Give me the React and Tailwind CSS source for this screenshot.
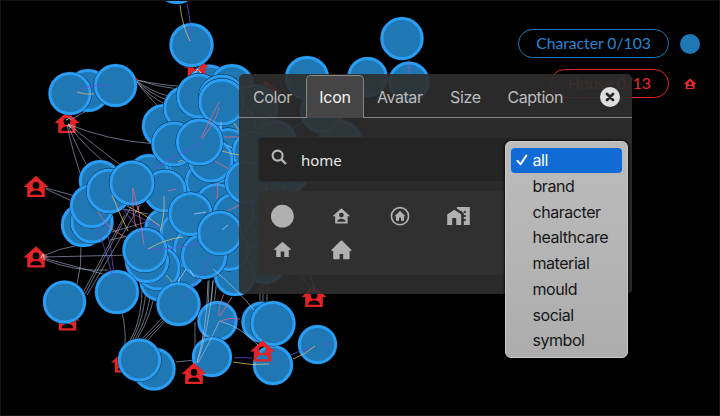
import React from "react";

const HOUSE =
  "M12 3 2 12h3v8h14v-8h3zM12 8a2.7 2.7 0 1 1 0 5.4A2.7 2.7 0 0 1 12 8zM7.3 18.2c0-4.6 9.4-4.6 9.4 0z";

// x, y, radius; drawn back to front
const FAR_NODES = [[209, 86, 21.5], [232, 86, 22]];
const BACK_NODES = [
  [177, -18, 22], [88, 90.5, 21.5], [70, 93.5, 21.5], [115.5, 85.5, 21.5],
  [254, 108, 24], [258, 140, 24], [248, 165, 24], [285, 170, 25], [275, 142, 22], [262, 198, 26],
  [254, 237, 22], [265, 262, 22], [340, 142, 22], [322, 111, 22], [307, 78, 22], [367.5, 77, 20],
  [409, 82, 20.5], [402, 38.5, 21.5],
  [190, 128, 22], [235, 125, 22], [205, 142, 23], [228, 150, 22], [254, 152, 22], [190, 168, 22], [207, 182, 22],
  [228, 200, 22], [207, 212, 22],
  [149, 175, 21], [165, 228, 20.5], [180, 232, 20], [186, 268, 20], [160, 281, 20.5], [164, 126, 22],
  [211, 160, 22.5], [217, 205, 22], [165, 191, 21.5], [234, 214, 21], [235, 275, 21], [229, 250, 21],
  [186, 108, 22.5], [174, 144, 22.5], [199, 96, 22.5], [222, 98, 23.5], [222, 102, 23.5],
  [247, 182, 22], [199.5, 142, 23.5],
  [100, 181, 21], [83, 225, 22], [92, 222, 21.5], [92, 206, 22], [109, 191, 22.5], [132, 183, 22.5],
  [196, 249, 23], [204, 256, 23], [190.5, 214, 22], [220, 233, 22.5],
  [158, 268, 22.5], [147, 261, 22], [145, 250, 22.5],
];
const FRONT_NODES = [
  [191.5, 45, 22], [117, 292, 22], [64.5, 302, 21.5], [178.5, 304, 22], [217.5, 321, 20], [212, 357, 20],
  [154, 369, 21.5], [139.5, 360, 21.5], [262, 322, 20.5], [273, 365, 20], [273, 323.5, 22.5],
  [317.5, 344.5, 19.5],
];
const BACK_HOUSES = [[196.5, 67], [67, 122.5], [36, 186.5], [36, 257], [67.5, 320], [123.5, 362], [266, 91]];
const FRONT_HOUSES = [[194, 373.5], [262.5, 351], [314, 296.5]];

const GREY_BACK = [
  "M67 125Q72 150 83 182", "M68 125Q77 148 92 175", "M69 125Q85 148 112 168", "M70 125Q90 142 122 166",
  "M68 124Q105 140 155 144", "M70 120L88 110", "M46 189L76 203", "M46 188L75 196",
  "M43 256Q60 248 75 246", "M43 257L130 255", "M43 258Q70 265 110 276", "M43 259Q75 272 108 270",
  "M137 80Q160 85 178 86", "M137 80Q158 87 178 89", "M137 81Q150 91 168 96", "M137 81Q150 94 167 100",
  "M137 82Q150 97 165 104", "M137 82Q150 99 158 106", "M81 245Q82 265 77 284", "M85 294L132 205",
  "M87 295L140 205", "M84 291L125 215", "M112 232L150 221", "M119 208L148 214", "M110 240L145 232",
  "M122 312Q126 330 125 345", "M130 341Q143 318 142 283", "M132 341Q146 315 146 283",
  "M134 341Q150 315 151 285", "M136 341Q154 312 155 286", "M140 341L168 312", "M142 342L174 310",
  "M145 343L180 305", "M209 280Q210 325 195 362", "M213 280Q212 320 196 362", "M217 279Q214 320 197 362",
  "M195 322L195 362", "M260 285V304", "M263 275V304", "M267 275V304", "M300 275L314 292", "M310 275L315 290",
  "M176 362L205 359", "M265 132Q290 132 307 120",
];
const GREY_FRONT = [
  "M208 281Q207 330 197 362", "M213 281Q209 330 197 363", "M219 322Q210 342 198 363",
  "M213 269Q235 287 254 310", "M219 321Q240 326 258 345",
];
const PURPLE = [
  "M75 92Q90 83 109 86", "M187 4Q191 20 191 42", "M96 228Q105 245 112 275", "M105 222Q112 248 114 275",
  "M147 249Q175 250 200 243", "M154 169Q175 155 202 143", "M234 358Q240 357 252 358",
  "M291 355Q300 350 315 347", "M235 321H228", "M125 210Q145 220 160 227", "M180 300Q198 285 211 256",
  "M323 344H331", "M272 366L278 360", "M120 205L146 239",
];
const YELLOW = [
  "M77 92Q85 95 94 94", "M180 5Q182 25 190 41", "M112 195Q120 215 128 231", "M127 206Q145 214 160 226",
  "M148 249Q165 239 183 237", "M164 196Q165 215 160 231", "M178 162L183 160", "M222 151Q231 154 240 155",
  "M234 123L240 132", "M233 362Q252 366 269 364", "M293 359Q306 354 315 346", "M166 275L172 282",
];
const PINK = [
  "M201 138L219 102", "M202 139Q218 118 219 107", "M98 211Q105 227 125 237", "M133 188L138 210",
  "M138 206L144 245", "M133 188Q132 214 136 227", "M224 137H240", "M215 161L229 169", "M218 182L217 199",
  "M227 211L240 205", "M168 191L176 189", "M219 316Q218 306 224 294", "M220 316L232 297",
  "M220 321Q230 317 240 319",
];
const PALE = ["M194 214L206 212", "M222 230L228 225", "M221 130V122", "M227 145L232 148", "M190 270L194 277", "M178 282L186 269"];

function Node({ c }) {
  return (
    <g>
      <circle cx={c[0]} cy={c[1]} r={c[2] + 0.5} fill="#09263d" />
      <circle cx={c[0]} cy={c[1]} r={c[2] - 1.4} fill="#1f77b4" stroke="#2a9df4" strokeWidth="3" />
    </g>
  );
}

function House({ p }) {
  return (
    <path d={HOUSE} fill="#e32326" fillRule="evenodd" transform={`translate(${p[0] - 15} ${p[1] - 14.4}) scale(1.25)`} />
  );
}

function Lines({ paths, color, opacity = 0.7, width = 0.9 }) {
  return (
    <g fill="none" stroke={color} strokeOpacity={opacity} strokeWidth={width}>
      {paths.map((d) => <path key={d} d={d} />)}
    </g>
  );
}

function Graph() {
  return (
    <svg className="absolute inset-0" width="720" height="416" viewBox="0 0 720 416">
      {FAR_NODES.map((c, i) => <Node key={i} c={c} />)}
      {BACK_HOUSES.map((p, i) => <House key={i} p={p} />)}
      <Lines paths={GREY_BACK} color="#a9b8d8" opacity={0.65} />
      {BACK_NODES.map((c, i) => <Node key={i} c={c} />)}
      {FRONT_NODES.map((c, i) => <Node key={i} c={c} />)}
      {FRONT_HOUSES.map((p, i) => <House key={i} p={p} />)}
      <Lines paths={GREY_FRONT} color="#a9c8e8" opacity={0.7} />
      <Lines paths={PURPLE} color="#6a50d8" opacity={0.85} />
      <Lines paths={YELLOW} color="#d8bf70" opacity={0.85} />
      <Lines paths={PINK} color="#d8688c" opacity={0.9} />
      <Lines paths={PALE} color="#a9c8f0" opacity={0.9} />
      <Lines paths={["M409 60V74"]} color="#a65ac0" />
      <Lines paths={["M66 120L70 118M68 124L71 128M195 73L197.5 69L201 73M41 258L43 254L44 258"]} color="#e8e4f4" opacity={0.8} width={1} />
      <circle cx="136.5" cy="79" r="0.9" fill="#e32326" />
    </svg>
  );
}

function Legend() {
  return (
    <div className="flex flex-col items-end gap-[11px] pt-[29px] pr-5 font-['Lato',sans-serif] text-[15.7px]">
      <div className="flex items-center gap-[11px]">
        <div className="flex h-[29px] w-[151px] items-center justify-center rounded-full border border-[#1f77b4] pt-px text-[#2487d0]">
          Character 0/103
        </div>
        <div className="size-5 rounded-full bg-[#1f77b4]" />
      </div>
      <div className="flex items-center gap-[11px]">
        <div className="flex h-[29px] w-[119px] items-center justify-center rounded-full border border-[#e32326] pt-px text-[#ee2a2d]">
          House 0/13
        </div>
        <svg className="size-5" viewBox="-4.2 -4 32 32">
          <path d={HOUSE} fill="#f0282b" fillRule="evenodd" />
        </svg>
      </div>
    </div>
  );
}

const label = "font-['Inter',sans-serif] text-[16px]";

function Tabs() {
  return (
    <div className="flex h-[44px] items-stretch">
      <div className={`flex w-[67px] items-center border-b border-[#858585] pl-[14px] pt-[2px] text-[#bcbcbc] ${label}`}>
        <span className="tracking-[-0.35px]">Color</span>
      </div>
      <div className={`mt-px flex w-[58px] items-center justify-center rounded-t-[5px] border border-b-0 border-[#858585] bg-[#454545] text-[#f4f4f4] ${label}`}>
        <span className="tracking-[-0.3px]">Icon</span>
      </div>
      <div className={`flex flex-1 items-center border-b border-[#858585] pl-[13px] pt-[2px] text-[#bcbcbc] ${label}`}>
        <span className="w-[73px] tracking-[-0.45px]">Avatar</span>
        <span className="w-[57.5px] tracking-[-0.35px]">Size</span>
        <span className="w-[92.5px] tracking-[-0.45px]">Caption</span>
        <svg className="size-5" viewBox="0 0 20 20">
          <circle cx="10" cy="10" r="10" fill="#dedede" />
          <path d="M7 7l6 6M13 7l-6 6" stroke="#242424" strokeWidth="2.8" strokeLinecap="round" />
        </svg>
      </div>
    </div>
  );
}

function IconGrid() {
  return (
    <div className="mt-[9px] grid h-[84px] w-[354px] grid-cols-[58.7px_58.7px_58.7px_58.7px] content-start justify-start gap-y-[10px] rounded-[5px] bg-[#303030] pl-[13px] pt-[13px] text-[#b0b0b0]">
      <svg className="size-6" viewBox="0 0 24 24" fill="currentColor">
        <circle cx="11.4" cy="12.2" r="11.4" />
      </svg>
      <svg className="size-6" viewBox="0 0 24 24">
        <path d={HOUSE} fill="currentColor" fillRule="evenodd" transform="translate(.7 1.6) scale(.89)" />
      </svg>
      <svg className="size-6" viewBox="0 0 24 24" fill="currentColor">
        <circle cx="12" cy="12.2" r="8.6" fill="none" stroke="currentColor" strokeWidth="1.6" />
        <path d="M12 7 6.4 12.2H8v4.6h3v-3.4h2v3.4h3v-4.6h1.6z" />
      </svg>
      <svg className="size-6" viewBox="0 0 24 24" fill="currentColor">
        <path d="M8.17 5.7 1 10.48V21h5v-7h4v7h5V10.25z" transform="translate(-.8 0)" />
        <path fillRule="evenodd" d="M10 3v1.51l2 1.33L13.73 7H15v.85l2 1.34V21h6V3zm7 4h2v2h-2zm2 4v2h-2v-2zm0 4v2h-2v-2z" transform="translate(-.2 0)" />
      </svg>
      <svg className="size-6" viewBox="0 0 24 24" fill="currentColor">
        <path d="M10 20v-6h4v6h5v-8h3L12 3 2 12h3v8z" transform="translate(.7 1) scale(.9)" />
      </svg>
      <svg className="size-6" viewBox="-.6 0 24 24" fill="currentColor">
        <path transform="translate(-1.2 0)" d="M11.2 2.8Q12 2 12.8 2.8l9 9q1 1.1-.5 1.1H20.2V20q0 1.2-1.2 1.2H13.8v-5.2h-3.6v5.2H5q-1.2 0-1.2-1.2v-7.1H2.7q-1.5 0-.5-1.1z" />
      </svg>
    </div>
  );
}

function Panel() {
  return (
    <div className="absolute left-[239px] top-[74px] h-[220px] w-[393px] overflow-hidden rounded-[5px] bg-[#2e2e2e]/91">
      <Tabs />
      <div className="pl-[19px] pt-[19px]">
        <div className="flex h-[45px] w-[354px] items-center rounded-[5px] border border-[#2b2b2b] bg-[#242424] pl-[12px]">
          <svg className="-mt-[5px] size-4" viewBox="0 0 16 16" fill="none" stroke="#b5b5b5" strokeWidth="2.1">
            <circle cx="6.6" cy="6.6" r="5" />
            <path d="M10.3 10.3 15 15" strokeWidth="2.4" />
          </svg>
          <span className="ml-[14px] pt-px font-['Noto_Sans',sans-serif] text-[15px] text-[#e8e8e8]">home</span>
        </div>
        <IconGrid />
      </div>
    </div>
  );
}

const OPTIONS = ["all", "brand", "character", "healthcare", "material", "mould", "social", "symbol"];

function Menu() {
  return (
    <div className="absolute left-[505px] top-[141px] h-[217px] w-[123px] rounded-[6px] border border-[#cbcbcb] bg-linear-to-b from-[#bcbcbc] to-[#adadad] px-[5px] pt-[5.8px] shadow-[0_0_2px_1px_rgba(0,0,0,0.7)]">
      {OPTIONS.map((name, i) => (
        <div
          key={name}
          className={`flex h-[25.7px] items-center rounded-[4px] pb-[0.5px] font-['Inter',sans-serif] text-[16px] tracking-[-0.45px] ${
            i === 0 ? "bg-[#106bd6] text-white" : "text-[#171717]"
          }`}
        >
          <svg className="ml-[5px] mr-[4.5px] size-3" viewBox="0 0 12 12" fill="none">
            {i === 0 && <path d="M1.5 6.8 4.5 10.2 10.3 1.6" stroke="white" strokeWidth="2" strokeLinecap="round" strokeLinejoin="round" />}
          </svg>
          {name}
        </div>
      ))}
    </div>
  );
}

export default function App() {
  return (
    <div className="relative h-[416px] w-[720px] overflow-hidden bg-black">
      <Graph />
      <div className="relative">
        <Legend />
      </div>
      <Panel />
      <Menu />
      <div className="pointer-events-none absolute inset-0 border border-[#111315]" />
    </div>
  );
}
